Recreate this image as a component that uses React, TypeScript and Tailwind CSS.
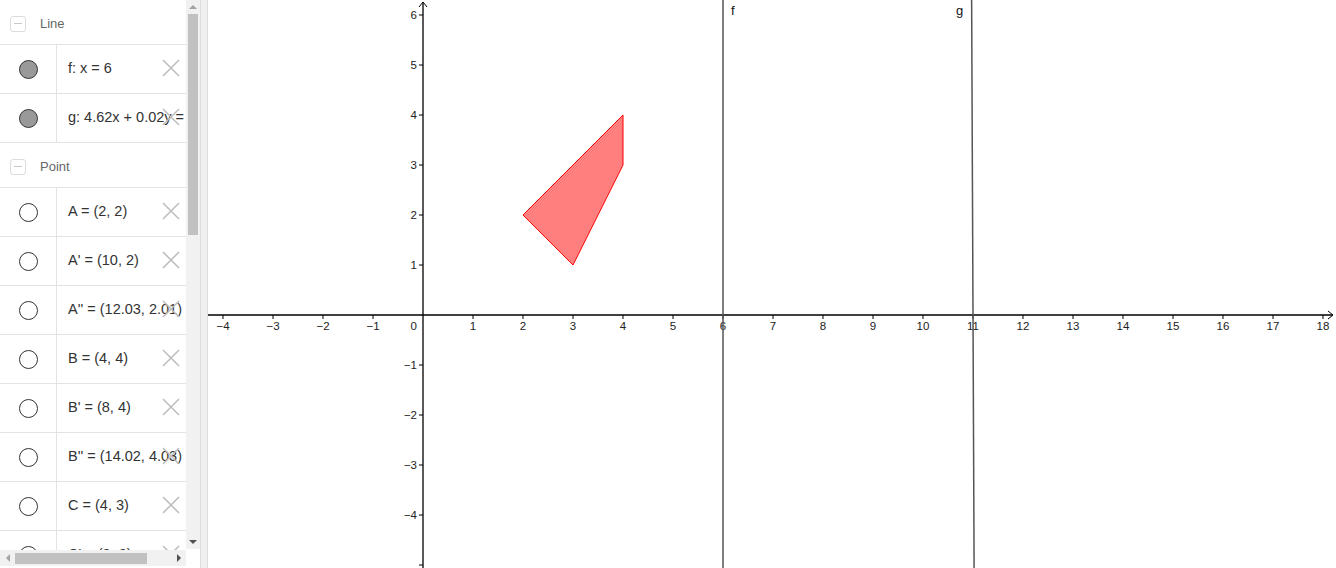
import React from "react";

const font = { fontFamily: '"Liberation Sans", Arial, sans-serif' };

type Item = { label: string; filled?: boolean };

const lines: Item[] = [
  { label: "f: x = 6", filled: true },
  { label: "g: 4.62x + 0.02y = 50.82", filled: true },
];

const points: Item[] = [
  { label: "A = (2, 2)" },
  { label: "A' = (10, 2)" },
  { label: "A'' = (12.03, 2.01)" },
  { label: "B = (4, 4)" },
  { label: "B' = (8, 4)" },
  { label: "B'' = (14.02, 4.03)" },
  { label: "C = (4, 3)" },
  { label: "C' = (8, 3)" },
];

function GroupHeader({ title }: { title: string }) {
  return (
    <div className="flex h-[45px] shrink-0 items-center border-b border-[#e3e3e3] pt-[3px]">
      <div className="ml-[10px] flex h-[16px] w-[16px] items-center justify-center rounded-[3px] border border-[#dcdcdc]">
        <div className="h-px w-[8px] bg-[#c8c8c8]" />
      </div>
      <span className="ml-[14px] text-[13px] text-[#666]">{title}</span>
    </div>
  );
}

function Row({ item }: { item: Item }) {
  return (
    <div className="relative flex h-[49px] shrink-0 border-b border-[#e3e3e3]">
      <div className="flex w-[57px] shrink-0 items-center justify-center border-r border-[#e3e3e3]">
        <div
          className={`h-[19px] w-[19px] rounded-full border border-[#333] ${
            item.filled ? "bg-[#999]" : "bg-white"
          }`}
        />
      </div>
      <div className="flex flex-1 items-center overflow-hidden whitespace-nowrap pl-[11px] text-[14.5px] text-[#333]">
        {item.label}
      </div>
      <svg
        className="absolute right-[6px] top-[14px]"
        width="18"
        height="18"
        viewBox="0 0 18 18"
      >
        <path d="M1 1 L17 17 M17 1 L1 17" stroke="#bcbcbc" strokeWidth="1.5" />
      </svg>
    </div>
  );
}

function AlgebraPanel() {
  return (
    <div className="flex h-full w-[200px] shrink-0 bg-white">
      <div className="flex w-[186px] flex-col">
        <div className="flex h-[550px] flex-col overflow-hidden">
          <GroupHeader title="Line" />
          {lines.map((it) => (
            <Row key={it.label} item={it} />
          ))}
          <GroupHeader title="Point" />
          {points.map((it) => (
            <Row key={it.label} item={it} />
          ))}
        </div>
        {/* horizontal scrollbar */}
        <div className="flex h-[16px] items-center bg-[#f1f1f1]">
          <div className="flex w-[15px] justify-center">
            <div className="h-0 w-0 border-y-[4px] border-r-[4px] border-y-transparent border-r-[#a3a3a3]" />
          </div>
          <div className="h-[11px] w-[132px] bg-[#c1c1c1]" />
          <div className="flex-1" />
          <div className="flex w-[15px] justify-center">
            <div className="h-0 w-0 border-y-[4px] border-l-[4px] border-y-transparent border-l-[#505050]" />
          </div>
        </div>
      </div>
      {/* vertical scrollbar */}
      <div className="flex w-[14px] flex-col items-center bg-[#f1f1f1]">
        <div className="flex h-[14px] items-center">
          <div className="h-0 w-0 border-x-[4px] border-b-[4px] border-x-transparent border-b-[#a3a3a3]" />
        </div>
        <div className="h-[221px] w-[10px] bg-[#c1c1c1]" />
        <div className="flex-1" />
        <div className="flex h-[14px] items-center">
          <div className="h-0 w-0 border-x-[4px] border-t-[4px] border-x-transparent border-t-[#505050]" />
        </div>
        <div className="h-[19px] w-full bg-white" />
      </div>
    </div>
  );
}

const OX = 215;
const OY = 315;
const U = 50;
const X = (v: number) => OX + U * v;
const Y = (v: number) => OY - U * v;
const neg = (n: number) => (n < 0 ? `\u2212${-n}` : `${n}`);

function Graph() {
  const xs = Array.from({ length: 23 }, (_, i) => i - 4).filter((n) => n !== 0);
  const ys = [-5, -4, -3, -2, -1, 1, 2, 3, 4, 5, 6];
  const gx = (yv: number) => 11 - (0.02 * yv) / 4.62;
  return (
    <svg width="1128" height="568" className="block" style={font}>
      <rect width="1128" height="568" fill="white" />
      {/* polygon */}
      <polygon
        points={`${X(2)},${Y(2)} ${X(4)},${Y(4)} ${X(4)},${Y(3)} ${X(3)},${Y(1)}`}
        fill="#ff0000"
        fillOpacity="0.5"
        stroke="#ff0000"
        strokeWidth="1"
      />
      {/* axes */}
      <line x1="0" y1={OY} x2="1125" y2={OY} stroke="#000" strokeWidth="1.3" />
      <path d={`M1120 ${OY - 4} L1125 ${OY} L1120 ${OY + 4}`} stroke="#000" fill="none" strokeWidth="1" />
      <line x1={OX} y1="2" x2={OX} y2="568" stroke="#000" strokeWidth="1.3" />
      <path d={`M${OX - 4} 7 L${OX} 2 L${OX + 4} 7`} stroke="#000" fill="none" strokeWidth="1" />
      {xs.map((n) => (
        <g key={`x${n}`}>
          <line x1={X(n)} y1={OY} x2={X(n)} y2={OY + 4} stroke="#000" strokeWidth="1" />
          <text x={X(n)} y={OY + 15} fontSize="11.5" textAnchor="middle" fill="#222">
            {neg(n)}
          </text>
        </g>
      ))}
      {ys.map((n) => (
        <g key={`y${n}`}>
          <line x1={OX - 4} y1={Y(n)} x2={OX} y2={Y(n)} stroke="#000" strokeWidth="1" />
          {n !== -5 && (
            <text x={OX - 6} y={Y(n) + 4} fontSize="11.5" textAnchor="end" fill="#222">
              {neg(n)}
            </text>
          )}
        </g>
      ))}
      <text x={OX - 6} y={OY + 15} fontSize="11.5" textAnchor="end" fill="#222">
        0
      </text>
      {/* lines f and g */}
      <line x1={X(6)} y1="0" x2={X(6)} y2="568" stroke="#555" strokeWidth="1.5" />
      <line x1={X(gx(6.3))} y1="0" x2={X(gx(-5.06))} y2="568" stroke="#555" strokeWidth="1.5" />
      <text x={X(6) + 8} y="15" fontSize="13" fill="#111">
        f
      </text>
      <text x={X(11) - 17} y="15" fontSize="13" fill="#111">
        g
      </text>
    </svg>
  );
}

export default function App() {
  return (
    <div className="flex h-[568px] w-[1336px] overflow-hidden bg-white" style={font}>
      <AlgebraPanel />
      <div className="h-full w-[8px] shrink-0 border-x border-[#dcdcdc] bg-[#f0f0f0]" />
      <Graph />
    </div>
  );
}
